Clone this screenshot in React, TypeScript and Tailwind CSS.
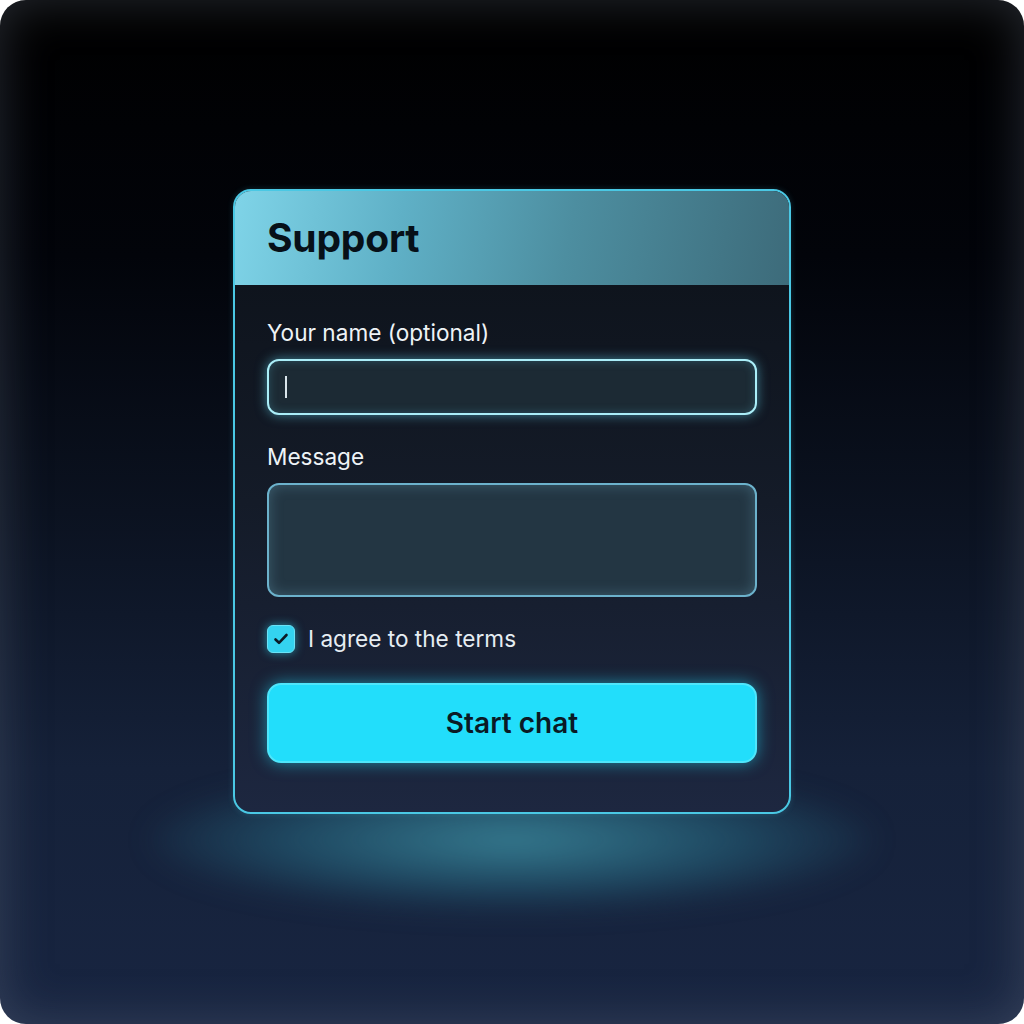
import React from "react";

export default function App() {
  return (
    <div className="w-[1024px] h-[1024px] bg-white" style={{ fontFamily: "Inter, 'Noto Sans', sans-serif" }}>
      <div className="relative w-full h-full rounded-[26px] overflow-hidden bg-[linear-gradient(180deg,#000000_0%,#02040a_25%,#0b1220_50%,#152139_75%,#182541_100%)] shadow-[inset_0_0_50px_rgba(110,120,140,0.35)] flex flex-col items-center pt-[189px]">
        <div className="absolute left-[150px] top-[770px] w-[724px] h-[140px] rounded-[50%] bg-[radial-gradient(ellipse_at_center,rgba(60,140,160,0.85)_0%,rgba(40,110,135,0.5)_45%,rgba(20,50,80,0)_75%)] blur-[14px]" />
        <div className="relative w-[558px] rounded-[18px] border-2 border-[#4ac8e4] bg-[linear-gradient(180deg,#0c1118_0%,#141b28_50%,#1d2740_100%)] overflow-hidden shadow-[0_0_6px_rgba(74,198,226,0.2)]">
          <div className="h-[94px] flex items-center px-8 bg-[linear-gradient(100deg,#7fd4e8_0%,#5fb0c6_30%,#4d8ea0_60%,#3d6b7a_100%)]">
            <h1 className="text-[39px] font-bold text-[#071018] tracking-[-0.2px]">Support</h1>
          </div>
          <div className="px-8 pt-[34px] pb-[49px] flex flex-col">
            <label className="text-[22.6px] leading-[28px] text-[#eef3f6]">Your name (optional)</label>
            <div className="mt-3 h-[56px] rounded-[12px] border-[2.5px] border-[#aaeef8] bg-[#1c2a34] shadow-[0_0_12px_rgba(100,215,240,0.55),inset_0_0_10px_rgba(90,200,225,0.25)] flex items-center px-[16px]">
              <div className="w-[2px] h-[22px] bg-[#d8e4ea]" />
            </div>
            <label className="mt-[28px] text-[22.6px] leading-[28px] text-[#eef3f6]">Message</label>
            <div className="mt-3 h-[114px] rounded-[12px] border-2 border-[#6cb2cc] bg-[#233643] shadow-[inset_0_0_14px_rgba(110,170,195,0.35)]" />
            <div className="mt-[28px] flex items-center gap-[13px]">
              <div className="w-[28px] h-[28px] rounded-[6px] bg-[#34d3f0] border border-[#6ae2f6] shadow-[0_0_10px_rgba(52,211,240,0.6)] flex items-center justify-center">
                <svg width="18" height="18" viewBox="0 0 18 18" fill="none">
                  <path d="M3.5 9.5l3.5 3.3L14.5 5" stroke="#0b1a26" strokeWidth="2.6" strokeLinecap="round" strokeLinejoin="round" />
                </svg>
              </div>
              <span className="text-[22.6px] leading-[28px] text-[#e6edf2]">I agree to the terms</span>
            </div>
            <button className="mt-[30px] h-[80px] rounded-[14px] bg-[#22defb] border-2 border-[#4fe6fb] shadow-[0_0_16px_rgba(34,222,251,0.55)] text-[28px] font-semibold text-[#0a1a25]">
              Start chat
            </button>
          </div>
        </div>
      </div>
    </div>
  );
}
